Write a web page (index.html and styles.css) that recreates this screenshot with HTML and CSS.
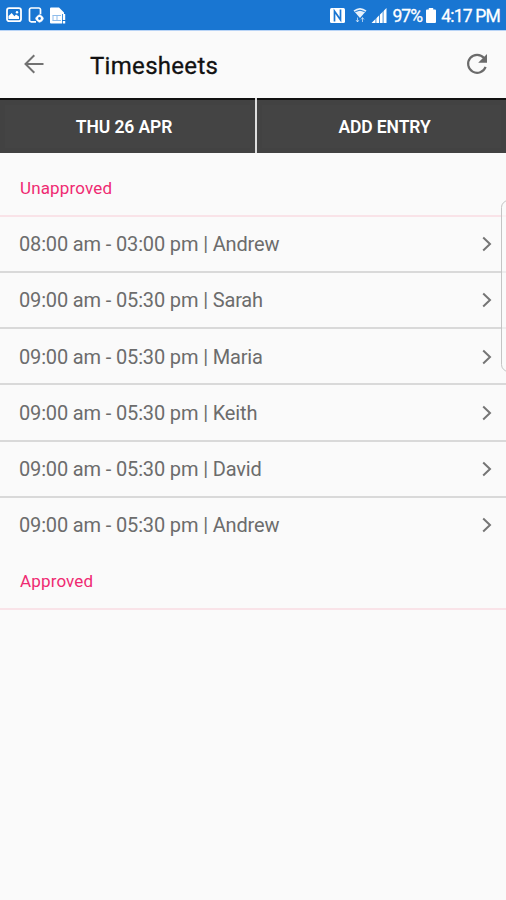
FILE: index.html
```html
<!DOCTYPE html>
<html lang="en">
<head>
    <meta charset="UTF-8">
    <meta name="viewport" content="width=device-width, initial-scale=1.0">
    <title>Timesheets</title>
    <link rel="stylesheet" href="styles.css">
</head>

<body>

    <!-- Status Bar -->
    <div class="status-bar">
        <div class="status-left">
            <svg width="16" height="16" viewBox="0 0 16 16">
                <rect x="1" y="1.2" width="14" height="13" rx="2.2" fill="none" stroke="#fff" stroke-width="1.8"/>
                <path d="M2.5 12V9l3.2-3 2.7 3.2 1.6-1.7L13 9.5V12z" fill="#fff"/>
                <circle cx="11" cy="5.3" r="1.2" fill="#fff"/>
            </svg>
            <svg width="16" height="16" viewBox="0 0 16 16">
                <path d="M8 14.8H3.2A1.7 1.7 0 0 1 1.5 13V2.8A1.7 1.7 0 0 1 3.2 1h7.6a1.7 1.7 0 0 1 1.7 1.8v4.4" fill="none" stroke="#fff" stroke-width="1.7"/>
                <circle cx="11.5" cy="11.5" r="2.5" fill="none" stroke="#fff" stroke-width="2.2"/>
                <path d="M11.5 7.4v1.6M11.5 14v1.6M7.4 11.5H9M14 11.5h1.6" stroke="#fff" stroke-width="1.8"/>
            </svg>
            <svg width="17" height="17" viewBox="0 0 17 17">
                <path d="M0 1.5Q0 0.5 1 0.5h8l5 5V7h-2v9.5H1q-1 0-1-1z" fill="#fff"/>
                <path d="M2.5 8.5h8.5M2.5 13.5h8.5M3 8.5v5M7 8.5v5" fill="none" stroke="#8fbceb"/>
                <path d="M14 7v6M14 14v2.5" stroke="#fff" stroke-width="2.4"/>
            </svg>
        </div>
        <div class="status-right">
            <svg class="nfc" width="15" height="15" viewBox="0 0 15 15">
                <rect width="15" height="15" rx="1.5" fill="#fff"/>
                <path d="M4.5 13.5V3.2L10.5 11.8V1.5" fill="none" stroke="#1976d2" stroke-width="1.7"/>
            </svg>
            <svg class="wifi" width="14" height="16" viewBox="0 0 14 16">
                <path d="M0.5 3.5Q7-1.5 13.5 3.5L7 11z" fill="#fff" opacity="0.9"/>
                <path d="M2.3 4.6q4.7-2.8 9.4 0" fill="none" stroke="#1976d2"/>
                <path d="M4.5 10.5v4.5M3 13l1.5 2L6 13M9.5 15v-4M8 12.5l1.5-2 1.5 2" fill="none" stroke="#fff" opacity="0.6"/>
            </svg>
            <svg class="signal" width="16" height="15" viewBox="0 0 15 15">
                <path d="M0 15L15 0v15z" fill="#fff"/>
                <path d="M4.4 8v7M8 5v10M11.6 2v13" stroke="#1976d2" stroke-width="0.8"/>
            </svg>
            <span class="percent">97%</span>
            <svg class="battery" width="10" height="15" viewBox="0 0 10 15">
                <path d="M2.8 0h4.4v1.5H9q1 0 1 1V14q0 1-1 1H1q-1 0-1-1V2.5q0-1 1-1h1.8z" fill="#fff"/>
            </svg>
            <span class="clock">4:17 PM</span>
        </div>
    </div>

    <!-- Toolbar -->
    <header class="toolbar">
        <svg class="back" width="20" height="20" viewBox="0 0 20 20">
            <path d="M19.5 10H2M10.3 1.2L1.5 10l8.8 8.8" fill="none" stroke="#727272" stroke-width="2"/>
        </svg>
        <h1>Timesheets</h1>
        <svg class="refresh" width="22" height="22" viewBox="0 0 22 22">
            <path d="M18 5A9 9 0 1 0 19.6 13.8" fill="none" stroke="#6b6b6b" stroke-width="2.2"/>
            <path d="M21 1v8.8h-8.8z" fill="#6b6b6b"/>
        </svg>
    </header>

    <div class="actions">
        <button type="button" class="date">THU 26 APR</button>
        <button type="button" class="add">ADD ENTRY</button>
    </div>

    <!-- Timesheet List -->
    <main>
        <h2 class="unapproved">Unapproved</h2>
        <ul class="entries">
            <li><span>08:00 am - 03:00 pm | Andrew</span><svg width="10" height="16" viewBox="0 0 10 16"><path d="M1.2 1.5L8 8l-6.8 6.5"/></svg></li>
            <li><span>09:00 am - 05:30 pm | Sarah</span><svg width="10" height="16" viewBox="0 0 10 16"><path d="M1.2 1.5L8 8l-6.8 6.5"/></svg></li>
            <li><span>09:00 am - 05:30 pm | Maria</span><svg width="10" height="16" viewBox="0 0 10 16"><path d="M1.2 1.5L8 8l-6.8 6.5"/></svg></li>
            <li><span>09:00 am - 05:30 pm | Keith</span><svg width="10" height="16" viewBox="0 0 10 16"><path d="M1.2 1.5L8 8l-6.8 6.5"/></svg></li>
            <li><span>09:00 am - 05:30 pm | David</span><svg width="10" height="16" viewBox="0 0 10 16"><path d="M1.2 1.5L8 8l-6.8 6.5"/></svg></li>
            <li><span>09:00 am - 05:30 pm | Andrew</span><svg width="10" height="16" viewBox="0 0 10 16"><path d="M1.2 1.5L8 8l-6.8 6.5"/></svg></li>
        </ul>
        <h2>Approved</h2>
    </main>

    <!-- Edge panel handle -->
    <div class="edge-handle"></div>

</body>
</html>
```
FILE: styles.css
```css
/* Global Styles */
* {
    margin: 0;
    padding: 0;
    box-sizing: border-box;
}

body {
    font-family: Roboto, sans-serif;
    background: #fafafa;
    color: #6c6c6c;
    min-height: 100vh;
    position: relative;
    overflow: hidden;
}

svg {
    flex: none;
}

/* Status Bar */
.status-bar {
    height: 31px;
    display: flex;
    justify-content: space-between;
    align-items: center;
    padding: 0 6px;
    background: #1976d2;
    border-bottom: 1px solid #b9d4f6;
    color: #fff;
    font-size: 17.5px;
    letter-spacing: -0.9px;
}

.status-left,
.status-right {
    display: flex;
    align-items: center;
    white-space: nowrap;
}

.status-left {
    gap: 6px;
}

.wifi {
    margin-left: 8px;
}

.signal {
    margin: 0 5px 0 4px;
}

.battery {
    margin: 0 5px 0 4px;
}

.percent,
.clock {
    padding-top: 2px;
    -webkit-text-stroke: 0.3px #fff;
}

.clock {
    letter-spacing: -0.8px;
}

/* Toolbar */
.toolbar {
    height: 67px;
    display: flex;
    align-items: center;
    padding: 0 18px 1px 24px;
}

.toolbar h1 {
    flex-grow: 1;
    margin-left: 46px;
    padding-top: 3px;
    font-size: 24px;
    font-weight: 400;
    letter-spacing: 0.3px;
    color: #111;
    -webkit-text-stroke: 0.3px #111;
}

/* Date and add buttons */
.actions {
    height: 55px;
    display: flex;
    gap: 2px;
    background: #ddd;
}

.actions button {
    flex: 1;
    border: none;
    border-top: 2px solid #111;
    background: #444;
    box-shadow: inset 0 0 0 5px #424242;
    color: #fff;
    font-family: inherit;
    font-size: 17.5px;
    font-weight: 600;
    letter-spacing: -0.1px;
}

.actions .date {
    flex: 0 0 255px;
    padding-right: 7px;
}

.actions .add {
    padding-left: 6px;
}

/* Timesheet List */
h2 {
    height: 56px;
    padding: 17px 20px 0;
    border-bottom: 2px solid #f9e3e8;
    font-size: 17px;
    line-height: 20px;
    font-weight: 400;
    letter-spacing: 0.15px;
    color: #ef2a72;
}

h2.unapproved {
    height: 63.5px;
    padding-top: 25px;
}

.entries {
    list-style: none;
}

.entries li {
    height: 56.25px;
    display: flex;
    justify-content: space-between;
    align-items: center;
    padding: 1px 14px 0 19px;
    border-bottom: 2px solid #d9d9d9;
    font-size: 20px;
    letter-spacing: -0.15px;
}

.entries li:last-child {
    border-bottom-color: transparent;
}

.entries path {
    fill: none;
    stroke: #757575;
    stroke-width: 2;
}

.edge-handle {
    position: absolute;
    top: 200px;
    right: -10px;
    width: 15px;
    height: 172px;
    border: 1px solid #c4c4c4;
    border-radius: 8px;
    background: rgba(250, 250, 250, 0.6);
}
```
